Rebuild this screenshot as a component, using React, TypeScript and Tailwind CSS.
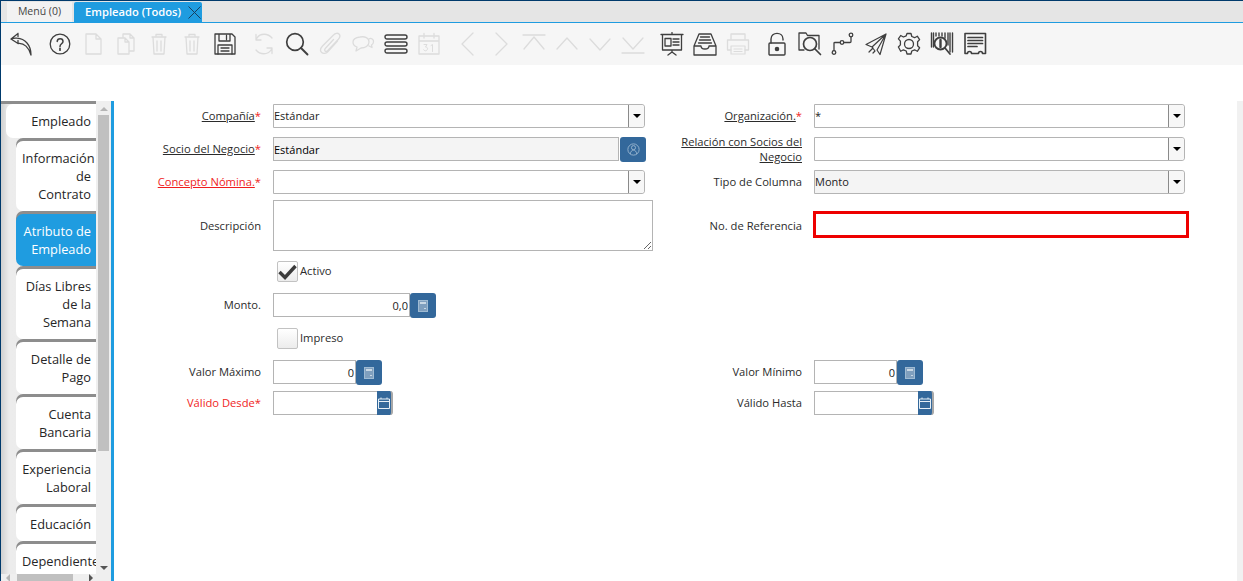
import React from "react";

const FONT = "font-['Open_Sans','Noto_Sans',sans-serif]";

type IconDef = { muted?: boolean; gap?: boolean; draw: React.ReactNode };

const toolbarIcons: IconDef[] = [
  { draw: <path d="M2 7l7-5.500M2 7l7 4.500M2 7c2-.800 4-1 6-.800 8 .5 14 6.800 14 16.800M9 11.500c6-.800 11 4 13 11.500M9 1.500v3M9 8.500v3" /> },
  { gap: true, draw: <><circle cx="12" cy="12" r="9.800" /><path d="M9.200 9.400c.2-3.600 5.800-3.600 5.800 0 0 2.400-3 2.400-3 5" strokeWidth="1.500" /><path d="M12 16.400v1.800" strokeWidth="1.700" /></> },
  { muted: true, draw: <path d="M5 2h10l5 5v15H5zM15 2v5h5" /> },
  { muted: true, draw: <path d="M9 6V2h7l4 4v13h-5M16 2v4h4M4 6h7l4 4v12H4zM11 6v4h4" /> },
  { muted: true, draw: <path d="M5 5h14M9 5V2.500h6V5M6 5l1 17h10l1-17M10 9v10M14 9v10" /> },
  { muted: true, draw: <path d="M5 5h14M9 5V2.500h6V5M6 5l1 17h10l1-17M10 9v10M14 9v10" /> },
  { draw: <><path d="M2 2h17l3 3v17H2zM6 2v7h11V2M13.500 3.500v4" strokeWidth="1.300" /><path d="M5 22v-9h14v9M8 16h8M8 19h8" strokeWidth="1.300" /></> },
  { muted: true, gap: true, draw: <path d="M20 6c-4-5-12-5-15 0l-1 2M4 2.500V8h5M4 18c4 5 12 5 15 0l1-2M20 21.500V16h-5" /> },
  { draw: <><circle cx="10" cy="10" r="8.300" strokeWidth="1.700" /><path d="M16 16l6.500 6.500" strokeWidth="1.900" /></> },
  { muted: true, draw: <path d="M19.500 9L10 19.500c-2 2.200-5 2.500-6.500.8-1.500-1.500-1-4 .8-6L15.500 3c1.800-2 4.300-2.200 5.500-1 1.300 1.300 1 3.500-.6 5.300L9.800 18.500c-1 1-2 1.200-2.700.5-.7-.6-.5-1.700.4-2.700l8-8.800" /> },
  { muted: true, draw: <path d="M9 5c5-1 9 1 9 5s-4 6-8 6l-5 3 1-4c-3-1-4-3-4-5 0-2.500 3-4.500 7-5zM18 7c2-1.500 5 .5 4.500 3-.2 1.500-1 2.500-2 3l.5 2.500-3-1.500" /> },
  { draw: <g strokeWidth="1.400"><rect x="1" y="3" width="22" height="4" rx="2" /><rect x="1" y="10" width="22" height="4" rx="2" /><rect x="1" y="17" width="22" height="4" rx="2" /></g> },
  { muted: true, draw: <><path d="M2 4h20v18H2zM2 9h20M7 1.500V6M17 1.500V6" /><path d="M7 12.500h3l-1.500 2.500c1.500 0 2 .8 2 1.800s-1 2-2 2-1.500-.5-1.800-1M14 13.500l1.500-1V19.500" strokeWidth="1" /></> },
  { muted: true, gap: true, draw: <path d="M17 1L6 12l11 11" /> },
  { muted: true, draw: <path d="M7 1l11 11L7 23" /> },
  { muted: true, draw: <path d="M1 3h22M2 17L12 5l10 12" /> },
  { muted: true, draw: <path d="M2 17L12 6l10 11" /> },
  { muted: true, draw: <path d="M2 7l10 11L22 7" /> },
  { muted: true, draw: <path d="M2 6l10 11L22 6M1 21h22" /> },
  { gap: true, draw: <g strokeWidth="1.300"><path d="M1 2.500h22M2.500 3v15h19V3M12 .5v2M12 18v2M12 20l-4 3M12 20l4 3" /><rect x="5" y="6.500" width="6" height="7.500" /><path d="M13 7h6M13 10h6M13 13h6" /></g> },
  { draw: <g strokeWidth="1.300"><path d="M1 14v9h22v-9l-5-12H6zM1 14h7c0 4 8 4 8 0h7" /><path d="M7.500 5h9M6.500 8h11M5.500 11h13" /></g> },
  { muted: true, draw: <><path d="M5 8V2h14v6M5 18H1.500V8h21v10H19" /><path d="M5 14h14v8H5zM8 17h8M8 19.500h8" strokeWidth="1.200" /></> },
  { gap: true, draw: <g strokeWidth="1.400"><path d="M6 11V7c0-7.500 12-7.500 12 0v1" /><rect x="4" y="11" width="16" height="12" rx="1" /><circle cx="12" cy="17" r="1.600" fill="currentColor" /></g> },
  { draw: <g strokeWidth="1.300"><path d="M21 17V3.500H9.500L8 1H1v17h5" /><circle cx="12" cy="12" r="6.500" strokeWidth="1.700" /><path d="M17 17l5.500 5.500" strokeWidth="1.700" /></g> },
  { draw: <g strokeWidth="1.300"><circle cx="3" cy="20.500" r="1.800" /><circle cx="11" cy="10.500" r="1.800" /><circle cx="20" cy="3" r="1.800" /><path d="M3 18.700V11c0-.5.500-.5 1-.5h5M13 10.500h6c.8 0 1-.5 1-1V5" /></g> },
  { draw: <g strokeWidth="1.200"><path d="M22 2L2 12.500l6 2.500L22 2l-9 16 3 4.500zM8 15l3 4M9 16l-4 4M11 19l-2 2" /></g> },
  { draw: <g strokeWidth="1.300"><path d="M10 1.500h4l.8 3 2.800 1.200 2.700-1.500 2.300 3.400-2 2.200v4l2 2-2.300 3.500-2.700-1.500-2.800 1.200-.8 3h-4l-.8-3-2.800-1.200-2.700 1.500L1.400 15l2-2.100v-3.800l-2-2.200 2.300-3.400 2.700 1.500 2.800-1.200z" /><circle cx="12" cy="12" r="4.500" /></g> },
  { draw: <><path d="M1.500 1v14M3.500 1v14M6 1v3M9 1v3M12 1v3M15 1v5M18 1v12M20 1v19M22.500 1v19" strokeWidth="1.400" /><circle cx="10.500" cy="11.500" r="6" strokeWidth="1.800" /><path d="M10.500 8v7" strokeWidth="2.400" /><path d="M15 16l5 6" strokeWidth="1.700" /></> },
  { draw: <g><path d="M2 1.500h20.500v20h-3a2 2 0 0 0-4 0h-7a2 2 0 0 0-4 0H2z" strokeWidth="1.600" /><path d="M5 5.500h14.500M5 8.500h14.500M5 11.500h14.500M5 14.500h9" strokeWidth="1.700" /></g> },
];

const sideTabs = [
  { lines: ["Información", "de", "Contrato"] },
  { lines: ["Atributo de", "Empleado"], active: true },
  { lines: ["Días Libres", "de la", "Semana"] },
  { lines: ["Detalle de", "Pago"] },
  { lines: ["Cuenta", "Bancaria"] },
  { lines: ["Experiencia", "Laboral"] },
  { lines: ["Educación"] },
  { lines: ["Dependiente"] },
];

const Caret = () => <span className="border-x-[4px] border-t-[4px] border-x-transparent border-t-black" />;

const Label = ({ children, red, underline, required, tall }: { children: React.ReactNode; red?: boolean; underline?: boolean; required?: boolean; tall?: boolean }) => (
  <div className={`h-6 flex items-center justify-end mr-3 text-right leading-[15px] ${tall ? "" : "pb-0.5"} ${red ? "text-[#f01d1d]" : "text-[#2b2b2b]"}`}>
    <span>
      <span className={underline ? "underline" : ""}>{children}</span>
      {required && <span className="text-[#f01d1d]">*</span>}
    </span>
  </div>
);

const TextInput = ({ value, className }: { value?: string; className: string }) => (
  <input
    readOnly
    value={value ?? ""}
    className={`h-6 border border-[#b4b4b4] text-[11px] text-black outline-none ${className}`}
  />
);

const Combo = ({ value, disabled, width = "w-[372px]" }: { value?: string; disabled?: boolean; width?: string }) => (
  <div className={`h-6 flex border border-[#b4b4b4] rounded-r-[3px] ${width} ${disabled ? "bg-[#f4f4f4]" : "bg-white"}`}>
    <div className="flex-1 flex items-center text-[11px] text-[#222]">{value}</div>
    <div className="w-4 border-l border-[#8a8a8a] bg-[#f7f7f7] rounded-r-[3px] flex items-center justify-center">
      <Caret />
    </div>
  </div>
);

const BlueButton = ({ children }: { children: React.ReactNode }) => (
  <div className="w-[26px] h-[25px] bg-[#33689b] rounded-[3px] flex items-center justify-center text-[#9fbbd3]">{children}</div>
);

const CalcIcon = () => (
  <svg width="10" height="12" viewBox="0 0 10 12" fill="none" stroke="currentColor">
    <rect x=".5" y=".5" width="9" height="11" fill="#7f9fbe" />
    <path d="M2 3h6" strokeWidth="2" stroke="#c9d8e5" />
    <path d="M6 8.500h2" stroke="#c9d8e5" />
  </svg>
);

const PersonIcon = () => (
  <svg width="13" height="13" viewBox="0 0 12 12" fill="none" stroke="currentColor" strokeWidth=".8">
    <circle cx="6" cy="6" r="5.200" />
    <circle cx="6" cy="4.300" r="1.900" />
    <path d="M3 10.200c.3-2.200 1.400-3.600 3-3.600s2.700 1.400 3 3.600" />
  </svg>
);

const NumberField = ({ value, width }: { value: string; width: string }) => (
  <div className="flex items-start">
    <input
      readOnly
      value={value}
      className={`h-6 border border-[#b4b4b4] pr-px text-right text-[11px] text-[#222] outline-none ${width}`}
    />
    <BlueButton><CalcIcon /></BlueButton>
  </div>
);

const DateField = ({ width }: { width: string }) => (
  <div className="flex items-start">
    <input readOnly value="" className={`h-6 border border-[#b4b4b4] border-r-0 outline-none ${width}`} />
    <div className="w-4 h-6 bg-[#33689b] border-r-2 border-[#a8a8a8] rounded-r-[3px] flex items-center justify-center">
      <svg width="12" height="12" viewBox="0 0 12 12" fill="none" stroke="#e6eff6">
        <path d="M.5 2h11v9.500H.5zM.5 4.500h11M3 .5V2M9 .5V2" />
      </svg>
    </div>
  </div>
);

const CheckBox = ({ label, checked }: { label: string; checked?: boolean }) => (
  <div className="h-[25px] flex items-center pl-1">
    <div className="w-[21px] h-[21px] border border-[#c2c2c2] rounded-[2px] bg-[linear-gradient(#ffffff,#ececec)] flex items-center justify-center">
      {checked && (
        <svg width="19" height="16" viewBox="0 0 19 16" fill="none" stroke="#3b3b3b" strokeWidth="3.400">
          <path d="M1.500 8l5.500 5.500L17.500 2" />
        </svg>
      )}
    </div>
    <span className="ml-0.5 text-[#2b2b2b]">{label}</span>
  </div>
);

export default function App() {
  return (
    <div className={`w-[1243px] h-[581px] overflow-hidden flex flex-col bg-white border-l border-t border-[#003a6c] text-[11.2px] ${FONT}`}>
      {/* window tabs */}
      <div className="h-[22px] shrink-0 bg-[#e5e5e5] border-b border-[#1f9ce0] flex items-end pl-1.5 pt-px gap-0.5">
        <div className="w-[65px] h-5 bg-[#f2f2f2] flex items-center justify-center text-[10.5px] text-[#444]">Menú (0)</div>
        <div className="w-[128px] h-5 bg-[#1f9ce0] rounded-t-[2px] flex items-center pl-[11px] text-[11.2px] text-white font-semibold">
          <span>Empleado (Todos)</span>
          <svg className="ml-[7px]" width="13" height="13" viewBox="0 0 13 13" stroke="#173f5f" strokeWidth="1">
            <path d="M.5.500l12 12M12.500.500l-12 12" />
          </svg>
        </div>
      </div>

      {/* toolbar */}
      <div className="h-[42px] shrink-0 bg-[#f6f6f6] flex items-center pl-[3px] pb-px">
        {toolbarIcons.map((icon, i) => (
          <div key={i} className={`w-[33px] flex justify-center ${icon.gap ? "ml-1.5" : ""} ${icon.muted ? "text-[#dcdcdc]" : "text-[#3f3f3f]"}`}>
            <svg width="24" height="24" viewBox="0 0 24 24" fill="none" stroke="currentColor" strokeWidth="1.300" strokeLinecap="round" strokeLinejoin="round">
              {icon.draw}
            </svg>
          </div>
        ))}
      </div>

      <div className="h-9 shrink-0" />

      <div className="flex-1 flex min-h-0">
        {/* side tabs */}
        <div className="w-[110px] shrink-0 flex flex-col overflow-hidden">
          <div className="flex-1 flex min-h-0">
            <div className="w-[95px] overflow-hidden bg-[linear-gradient(90deg,#d0d0d0,#ececec_8px,#e9e9e9)] border-t-[3px] border-[#8d8d8d] text-[12.8px] leading-[18px] text-[#262626]">
              <div className="ml-[5px] h-[34px] bg-white rounded-l-[7px] flex items-center justify-end pr-[5px]">Empleado</div>
              {sideTabs.map((tab) => (
                <div
                  key={tab.lines[0]}
                  className={`ml-[15px] w-[85px] mt-[3px] py-2 pl-1.5 pr-[10px] rounded-l-[7px] text-right shadow-[0_-3px_0_#8d8d8d] ${tab.active ? "bg-[#1f9ce0] text-white font-medium" : "bg-white"}`}
                >
                  {tab.lines.map((line) => (
                    <div key={line} className="whitespace-nowrap">{line}</div>
                  ))}
                </div>
              ))}
            </div>
            <div className="w-[15px] bg-[#efefef] flex flex-col items-center pt-1.5">
              <span className="border-x-[4px] border-b-[4px] border-x-transparent border-b-[#b5b5b5]" />
              <div className="w-[11px] h-[336px] mt-1 bg-[#c0c0c0]" />
              <div className="flex-1" />
              <span className="mb-1 border-x-[4px] border-t-[4px] border-x-transparent border-t-[#555]" />
            </div>
          </div>
          <div className="h-[7px] shrink-0 bg-[#efefef] flex items-center pl-[5px]">
            <span className="border-y-[4px] border-r-[4px] border-y-transparent border-r-[#b5b5b5]" />
            <div className="ml-[7px] w-14 h-[7px] bg-[#c0c0c0]" />
            <span className="ml-4 border-y-[4px] border-l-[4px] border-y-transparent border-l-[#555]" />
          </div>
        </div>

        <div className="w-[3px] shrink-0 bg-[#1f9ce0]" />

        {/* form */}
        <div className="flex-1 pt-[3px]">
          <div className="grid grid-cols-[159px_380px_161px_375px] grid-rows-[33px_33px_30px_58px_35px_33px_34px_31px_24px] items-start">
            <Label underline required>Compañía</Label>
            <Combo value="Estándar" />
            <Label underline required>Organización.</Label>
            <Combo value="*" width="w-[371px]" />

            <Label underline required>Socio del Negocio</Label>
            <div className="flex items-start">
              <TextInput value="Estándar" className="w-[346px] bg-[#f4f4f4] text-[#444]" />
              <div className="ml-px"><BlueButton><PersonIcon /></BlueButton></div>
            </div>
            <Label underline tall>Relación con Socios del<br />Negocio</Label>
            <Combo width="w-[371px]" />

            <Label red underline required>Concepto Nómina.</Label>
            <Combo />
            <Label>Tipo de Columna</Label>
            <Combo value="Monto" disabled width="w-[371px]" />

            <div className="h-[51px] pt-0.5 flex items-center justify-end mr-3 text-[#2b2b2b]">Descripción</div>
            <textarea readOnly value="" className="w-[380px] h-[51px] border border-[#b4b4b4] outline-none" />
            <div className="h-[51px] pt-0.5 flex items-center justify-end mr-3 text-[#2b2b2b]">No. de Referencia</div>
            <div className="h-[51px] flex items-center">
              <input readOnly value="" className="w-[376px] h-[27px] -ml-px mb-0.5 border-[3px] border-[#ee0000] outline-none" />
            </div>

            <div className="col-start-2 col-span-3 pt-px"><CheckBox label="Activo" checked /></div>

            <Label>Monto.</Label>
            <div className="col-span-3"><NumberField value="0,0" width="w-[137px]" /></div>

            <div className="col-start-2 col-span-3"><CheckBox label="Impreso" /></div>

            <Label>Valor Máximo</Label>
            <NumberField value="0" width="w-[83px]" />
            <Label>Valor Mínimo</Label>
            <NumberField value="0" width="w-[83px]" />

            <Label red required>Válido Desde</Label>
            <DateField width="w-[104px]" />
            <Label>Válido Hasta</Label>
            <DateField width="w-[104px]" />
          </div>
        </div>

        <div className="w-1.5 shrink-0 bg-[#f1f1f1]" />
      </div>
    </div>
  );
}
